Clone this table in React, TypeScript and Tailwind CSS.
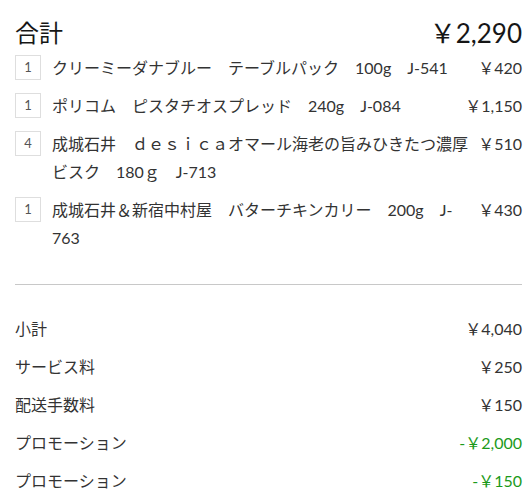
const ITEMS = [
  { qty: 1, name: "クリーミーダナブルー　テーブルパック　100g　J-541", price: "￥420" },
  { qty: 1, name: "ポリコム　ピスタチオスプレッド　240g　J-084", price: "￥1,150" },
  { qty: 4, name: "成城石井　ｄｅｓｉｃａオマール海老の旨みひきたつ濃厚ビスク　180ｇ　J-713", price: "￥510" },
  { qty: 1, name: "成城石井＆新宿中村屋　バターチキンカリー　200g　J-763", price: "￥430" },
];

const SUMMARY = [
  { label: "小計", value: "￥4,040" },
  { label: "サービス料", value: "￥250" },
  { label: "配送手数料", value: "￥150" },
  { label: "プロモーション", value: "-￥2,000", promo: true },
  { label: "プロモーション", value: "-￥150", promo: true },
];

export default function App() {
  return (
    <div
      className="min-h-[496px] w-[529px] bg-white pl-[15px] pr-[7px] pt-[14px] text-[#333]"
      style={{ fontFamily: 'Lato, "Noto Sans CJK JP", sans-serif' }}
    >
      {/* header total */}
      <div className="flex h-[38px] items-center justify-between text-[#161616]">
        <span className="text-[24px] leading-none">合計</span>
        <span className="text-[26px] leading-none">￥2,290</span>
      </div>

      <ul className="mt-[2px] flex flex-col gap-[10px]">
        {ITEMS.map((it, i) => (
          <li key={i} className="flex items-start text-[16px] leading-[28px]">
            <span className="mt-[1px] flex h-[25px] w-[26px] flex-none items-center justify-center border border-[#dedede] text-[13px] leading-none text-[#555]">
              {it.qty}
            </span>
            <span className="ml-[11px] min-w-0 flex-1">{it.name}</span>
            <span className="ml-[8px] flex-none whitespace-nowrap text-right">{it.price}</span>
          </li>
        ))}
      </ul>

      <div className="mt-[32px] h-px bg-[#c8c8c8]" />

      <div className="mt-[30px] flex flex-col gap-[10px]">
        {SUMMARY.map((s, i) => (
          <div key={i} className="flex items-center justify-between text-[16px] leading-[28px]">
            <span>{s.label}</span>
            <span className={s.promo ? "text-[#1b9a1b]" : ""}>{s.value}</span>
          </div>
        ))}
      </div>
    </div>
  );
}
